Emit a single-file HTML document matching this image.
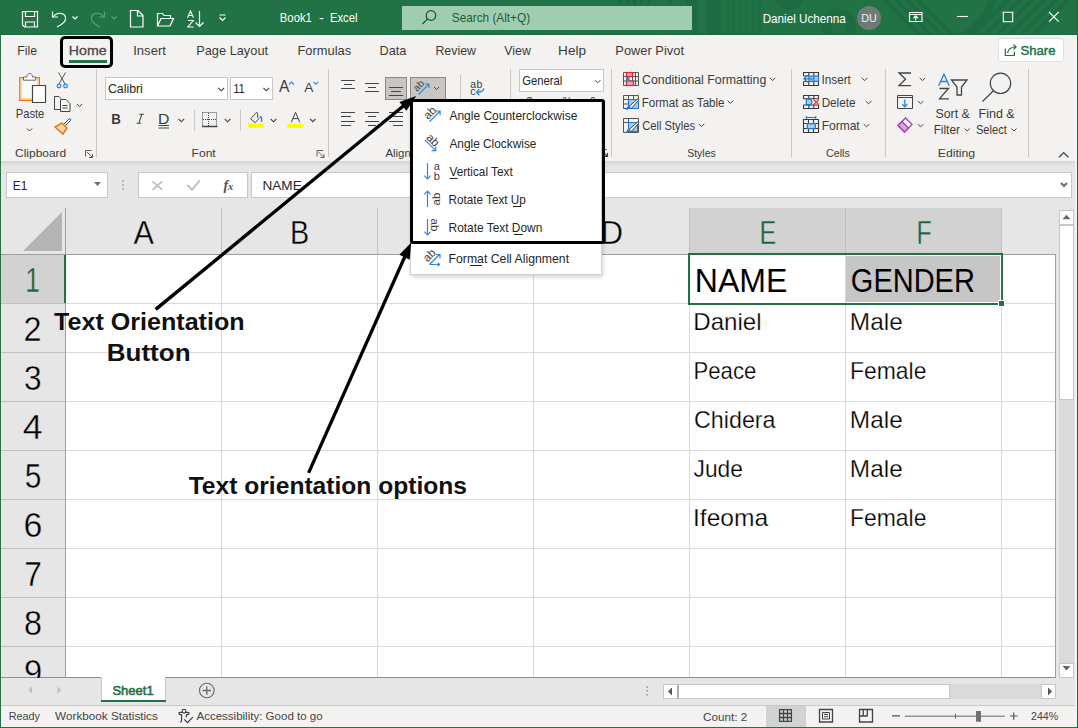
<!DOCTYPE html>
<html><head><meta charset="utf-8">
<style>
*{margin:0;padding:0;box-sizing:border-box}
html,body{width:1078px;height:728px;overflow:hidden;background:#f3f2f1;font-family:"Liberation Sans",sans-serif;color:#262626}
.a{position:absolute}
svg{position:absolute;left:0;top:0;overflow:visible}
svg text{font-family:"Liberation Sans",sans-serif}
.tl{left:0;top:0}
</style></head><body>
<!-- title bar -->
<div class="a" style="left:0;top:0;width:1078px;height:35px;background:#217346;border-bottom:1px solid #17683a"></div>
<div class="a" style="left:1px;top:35px;width:1075px;height:1px;background:#fdfbfb"></div>
<div class="a" style="left:1px;top:35px;width:1px;height:126px;background:#fdfbfb"></div>
<svg width="1078" height="34" style="overflow:hidden;height:34px">
 <g fill="#1f6b41">
  <rect x="707.5" y="0" width="13" height="34"/>
  <path d="M685 0h13v34h-4z"/>
  <rect x="619" y="0" width="3" height="5"/><rect x="626" y="0" width="3" height="5"/><rect x="633" y="0" width="3" height="5"/><rect x="640" y="0" width="3" height="5"/><rect x="648" y="0" width="3" height="5"/>
  <path d="M667 0h7l-3.5 5z"/>
  <rect x="727" y="0" width="1.6" height="34"/><rect x="733" y="0" width="1.6" height="34"/><rect x="739" y="0" width="1.6" height="34"/><rect x="745" y="0" width="1.6" height="34"/><rect x="752" y="0" width="1.6" height="34"/><rect x="759" y="0" width="1.6" height="34"/>
  <circle cx="789.5" cy="-4" r="14"/>
 </g>
 <g fill="none" stroke="#1f6b41">
  <circle cx="838.5" cy="26" r="12.5" stroke-width="10"/>
  <path d="M880 -5l40 40 M891 -5l40 40 M902 -5l40 40 M913 -5l40 40" stroke-width="4"/>
  <path d="M993 -2Q987 20 963 36" stroke-width="8"/>
  <path d="M1008 0l-34 34 M1020 0l-34 34 M1032 0l-34 34 M1044 0l-34 34 M1056 0l-34 34 M1068 0l-34 34" stroke-width="4"/>
 </g>
</svg>
<!-- green window border -->
<div class="a" style="left:0;top:0;width:1px;height:728px;background:#217346"></div>
<div class="a" style="left:1077px;top:0;width:1px;height:728px;background:#17683a"></div>
<div class="a" style="left:1076px;top:35px;width:1px;height:692px;background:#f7f3f3"></div>
<div class="a" style="left:0;top:726.5px;width:1078px;height:1.5px;background:#217346"></div>

<!-- title bar icons -->
<svg width="1078" height="34">
 <g fill="none" stroke="#fff" stroke-width="1.2">
  <path d="M22.5 11.5h15v15.5h-13l-2-2z"/>
  <path d="M25.5 11.5v5h9v-5M25.5 27v-5h9v5"/>
  <path d="M52.5 11.5v5.5h5.5"/>
  <path d="M53 17 C57 11.5 66 12 65.5 19 C65.5 21.5 63 24 57 27"/>
  <path d="M72.5 16.5l2.5 2.5 2.5-2.5"/>
 </g>
 <g fill="none" stroke="#5e9f7a" stroke-width="1.2">
  <path d="M104.5 11.5v5.5h-5.5"/>
  <path d="M104 17 C100 11.5 91 12 91.5 19 C91.5 21.5 94 24 100 27"/>
  <path d="M111.5 16.5l2.5 2.5 2.5-2.5"/>
 </g>
 <g fill="none" stroke="#fff" stroke-width="1.2">
  <path d="M130.5 10.5h7.5l5 5v11.5h-12.5z M137.5 10.5v5.5h5.5"/>
  <path d="M157.5 26v-12.5h5l1.5 2h6.5v3 M157.5 26h12.5l3.5-7.5h-12.5z"/>
 </g>
 <path d="M187.5 17.8l3-6.8 3 6.8 M188.6 15.5h3.8 M187.8 20.5h5.5l-5.5 6.5h5.8" fill="none" stroke="#fff" stroke-width="1.1"/>
 <g fill="none" stroke="#fff" stroke-width="1.2">
  <path d="M199.5 11v15.5M195.5 22.5l4 4 4-4"/>
  <path d="M219.5 15h6M219.5 17.5l3 3 3-3"/>
 </g>
</svg>
<!-- search -->
<div class="a" style="left:402px;top:6px;width:290px;height:24px;background:#a0cdb0"></div>
<svg width="700" height="34">
 <g fill="none" stroke="#1f4e31" stroke-width="1.2"><circle cx="431" cy="15.5" r="4.8"/><path d="M427.5 19l-5 5"/></g>
</svg>
<div class="a" style="left:857px;top:6px;width:24px;height:24px;border-radius:50%;background:#6e7b74"></div>
<svg width="1078" height="34">
 <g fill="none" stroke="#fff" stroke-width="1.1">
  <path d="M909.5 12.5h12.5v9h-12.5z M909.5 14.5h12.5 M915.7 20.5v-4.5 M913.3 18.3l2.4-2.4 2.4 2.4"/>
  <path d="M957 16.5h11"/>
  <path d="M1003.3 12.3h9.4v9.4h-9.4z"/>
  <path d="M1049 12l9.7 9.7 M1058.7 12l-9.7 9.7"/>
 </g>
</svg>

<!-- tabs -->
<div class="a" style="left:60px;top:36px;width:53px;height:32px;border:3px solid #000;border-radius:5px"></div>
<div class="a" style="left:69px;top:60px;width:38px;height:3px;background:#217346"></div>
<div class="a" style="left:998px;top:38px;width:66px;height:24px;background:#fff;border:1px solid #e1dfdd;border-radius:3px"></div>
<svg width="1078" height="70">
 <g fill="none" stroke="#217346" stroke-width="1.2"><path d="M1005.3 48.5v7h9v-4 M1007.5 53c1-4 3.5-6 8-6 M1013.5 44.5l2.5 2.5-2.5 2.5"/></g>
</svg>

<!-- ribbon separators -->
<svg width="1078" height="165">
 <g stroke="#c8c6c4" stroke-width="1">
  <path d="M96.5 69v88 M328.5 69v88 M460.5 75v82 M510.5 69v88 M611.5 69v88 M791.5 69v88 M885.5 69v88 M1028.5 69v88"/>
  <path d="M194.5 110v21 M240.5 110v21"/>
 </g>
</svg>

<!-- clipboard -->
<svg width="100" height="165">
 <path d="M19.8 77.7h19.5v22.5h-19.5z" fill="#f9f9f9" stroke="#e87a10" stroke-width="1.4"/>
 <path d="M21.3 79.2h16.5v19.5h-16.5z" fill="none" stroke="#f8dc95" stroke-width="1.3"/>
 <path d="M23.5 80.2v-3.2h3.3c0.3-2.3 1.4-3.6 2.9-3.6s2.6 1.3 2.9 3.6h3.1v3.2z" fill="#fff" stroke="#666" stroke-width="1"/>
 <path d="M32.5 85.5h13v17h-13z" fill="#fff" stroke="#444" stroke-width="1.2"/>
 <g fill="none" stroke="#555" stroke-width="1"><path d="M58.5 72.5l6.5 11.5 M65.5 72.5l-6.5 11.5"/></g>
 <g fill="none" stroke="#2b88d8" stroke-width="1.3"><circle cx="59" cy="86" r="1.8"/><circle cx="65.5" cy="86" r="1.8"/></g>
 <g fill="none" stroke="#444" stroke-width="1"><path d="M60.5 109.5h-6v-13h4.5l2 2 M60.5 99.5h5.5l4 4v8h-9.5z M62.5 105.5h5 M62.5 108h5"/><path d="M77 104l2.5 2.5 2.5-2.5"/><path d="M27 128.5l2.5 2.5 2.5-2.5"/></g>
 <path d="M55 127l7-4 5 5-4 6z" fill="#fbd4a8" stroke="#e07a1f" stroke-width="1.5"/>
 <path d="M64 124l5-5c1-1 2.5 0.5 1.5 1.5l-5 5" fill="#fff" stroke="#444" stroke-width="1"/>
 <path d="M85.5 150.5h6 M85.5 150.5v6 M87 152l5.5 5.5 M92.5 154v3.5h-3.5" fill="none" stroke="#605e5c" stroke-width="1"/>
</svg>

<!-- font group -->
<div class="a" style="left:105px;top:77px;width:123px;height:23px;background:#fff;border:1px solid #c8c6c4"></div>
<div class="a" style="left:230px;top:77px;width:43px;height:23px;background:#fff;border:1px solid #c8c6c4"></div>
<svg width="340" height="165">
 <g fill="none" stroke="#444" stroke-width="1.1">
  <path d="M218.5 88l2.8 2.8 2.8-2.8 M263.5 88l2.8 2.8 2.8-2.8"/>
  <path d="M178.5 119l2.8 2.8 2.8-2.8 M224.8 119l2.8 2.8 2.8-2.8 M270.7 119l2.8 2.8 2.8-2.8 M310.2 119l2.6 2.6 2.6-2.6"/>
 </g>
 <g fill="none" stroke="#2b88d8" stroke-width="1.1"><path d="M289 84.5l2.5-2.5 2.5 2.5 M313.5 81.8l2.3 2.5 2.3-2.5"/></g>
 <g fill="none" stroke="#444" stroke-width="1"><path d="M158.5 125.5h10.5 M158.5 128h10.5"/></g>
 <path d="M139.3 114.2h4.6 M136.6 123.3h4.6 M141.8 114.2l-3 9.1" fill="none" stroke="#444" stroke-width="1.1"/>
 <g fill="none" stroke="#444" stroke-width="1"><path d="M202.5 112.5h14v14 M202.5 112.5v14" stroke-dasharray="1 1"/><path d="M208.5 113v13 M203 119.5h13" stroke-dasharray="1 1"/><path d="M202 126.5h15.5" stroke-width="1.5"/></g>
 <rect x="248" y="123.8" width="16" height="4.1" fill="#ffff00"/>
 <rect x="287.3" y="123.8" width="15.5" height="4.1" fill="#ffff00"/>
 <path d="M291.3 122.3l4.2-10.1 4.2 10.1 M292.8 118.6h5.4" fill="none" stroke="#444" stroke-width="1"/>
 <path d="M250.6 118.7l4.6 4 4.6-5.2 M250.6 118.7l5-5.2c0.4-1.4 2-1.4 2 0v4.2" fill="none" stroke="#444" stroke-width="1"/>
 <path d="M259.8 116.3c1.6 0.3 2.2 2.5 1.7 5.6" fill="none" stroke="#2b88d8" stroke-width="1.5"/>
 <path d="M317 150.5h6 M317 150.5v6 M318.5 152l5.5 5.5 M324 154v3.5h-3.5" fill="none" stroke="#605e5c" stroke-width="1"/>
</svg>

<!-- alignment group -->
<svg width="620" height="165">
 <g fill="none" stroke="#444" stroke-width="1">
  <path d="M341 80.5h14 M344 84.5h8 M341 88.5h14"/>
  <path d="M365 83.5h14 M368 87.5h8 M365 91.5h14"/>
  <path d="M341 112.5h14 M341 116.5h10 M341 121.5h14 M341 125.5h10"/>
  <path d="M365 112.5h14 M368 116.5h8 M365 121.5h14 M368 125.5h8"/>
  <path d="M389 112.5h14 M393 116.5h10 M389 121.5h14 M393 125.5h10"/>
 </g>
</svg>
<div class="a" style="left:385px;top:77px;width:22px;height:23px;background:#c8c6c4;border:1px solid #8a8886"></div>
<svg width="620" height="165"><g fill="none" stroke="#444" stroke-width="1"><path d="M389 87.5h14 M391 91.5h10 M389 95.5h14"/></g></svg>
<div class="a" style="left:410px;top:77px;width:36px;height:23px;background:#c8c6c4;border:1px solid #8a8886"></div>
<svg width="620" height="165">
 <text transform="translate(418.5 85.5) rotate(-45)" y="3.6" font-size="10" fill="#444" text-anchor="middle">ab</text>
 <path d="M418.5 94.5l10.5-10.5 M425 84h4v4" fill="none" stroke="#2b88d8" stroke-width="1.1"/>
 <path d="M434 87l2.6 2.6 2.6-2.6" fill="none" stroke="#444" stroke-width="1"/>
 <text x="470.3" y="87.6" font-size="10.5" textLength="12" lengthAdjust="spacing" fill="#3b3a39">ab</text>
 <text x="470.3" y="95" font-size="10.5" fill="#3b3a39">c</text>
 <path d="M483.8 88.2c0.3 2.5-2.5 4.1-7.3 4.1 M479.4 89.3l-3 3 3 3" fill="none" stroke="#2b88d8" stroke-width="1.3"/>
</svg>

<!-- number -->
<div class="a" style="left:519px;top:69px;width:85px;height:23px;background:#fff;border:1px solid #c8c6c4"></div>
<svg width="620" height="165"><path d="M595 80.2l2.7 2.7 2.7-2.7" fill="none" stroke="#444" stroke-width="1"/>
 <path d="M600.5 149.5h6 M600.5 149.5v6 M602 151l5.5 5.5 M607.5 153v3.5h-3.5" fill="none" stroke="#3b3a39" stroke-width="1.1"/>
 <g fill="#444" font-size="11"><text x="526.5" y="104.8">$</text><text x="562.5" y="104.8">%</text><text x="590" y="104.8">9</text></g>
</svg>

<!-- styles -->
<svg width="800" height="165">
 <g stroke="#555" stroke-width="1" fill="none">
  <path d="M623.5 72.5h15v13h-15z M623.5 76.5h15 M623.5 81h15 M626.5 72.5v13 M632.5 72.5v13 M635.5 72.5v13"/>
 </g>
 <rect x="626.5" y="72.5" width="6" height="4" fill="#f4a3ad" stroke="#e0242f" stroke-width="1.2"/>
 <rect x="626.5" y="81" width="7" height="4.5" fill="#f4a3ad" stroke="#e0242f" stroke-width="1.2"/>
 <rect x="626.2" y="76.8" width="3.3" height="4" fill="#2b88d8"/>
 <g stroke="#555" stroke-width="1" fill="none">
  <path d="M623.5 95.5h15v13h-15z M623.5 99.5h15 M623.5 104h15 M628.5 95.5v13 M633.5 95.5v13"/>
 </g>
 <path d="M628.5 99.5h10v9h-10z" fill="#9fcdf3" stroke="#1f7ad1" stroke-width="1.1"/>
 <g stroke="#555" stroke-width="1" fill="none">
  <path d="M623.5 118.5h15v14h-15z M623.5 122.5h15 M628.5 118.5v14"/>
 </g>
 <path d="M628.5 122.5h9v9h-9z" fill="#9fcdf3" stroke="#1f7ad1" stroke-width="1.1"/>
 <path d="M629 106.5l8.3-7.3c0.9-0.8 2 0.3 1.2 1.2l-7.3 8.3z M629 129.5l8.3-7.3c0.9-0.8 2 0.3 1.2 1.2l-7.3 8.3z" fill="#f3f2f1" stroke="#444" stroke-width="1"/>
 <path d="M625.5 109.8c1.5 0.2 3.5-0.3 4.8-2.8l-1.5-1.3c-1.8 0.8-2.5 2.5-3.3 4.1z M625.5 132.8c1.5 0.2 3.5-0.3 4.8-2.8l-1.5-1.3c-1.8 0.8-2.5 2.5-3.3 4.1z" fill="#1f7ad1"/>
 <g fill="none" stroke="#444" stroke-width="1"><path d="M769.8 77.8l2.75 2.75 2.75-2.75 M727.6 100.6l2.8 2.8 2.8-2.8 M698.7 123.8l2.8 2.8 2.8-2.8"/></g>
 <path d="M702 150.5h6" stroke="#eee"/>
</svg>

<!-- cells -->
<svg width="1078" height="165">
 <g stroke="#3b3a39" stroke-width="1.1" fill="none">
  <path d="M803.5 76v-3.5h15v13h-15v-3.5 M803.5 76h5.5 M803.5 81.5h5.5 M808.8 72.5v3.5 M808.8 81.5v4 M813.8 72.5v13 M818.5 76v5.5"/>
  <path d="M803.5 98.8v-3.3h15v3.3 M803.5 105v3.5h15v-3.5 M803.5 98.8h15 M803.5 105h15 M808.8 95.5v3.3 M813.8 95.5v3.3 M808.8 105v3.5 M813.8 105v3.5"/>
  <path d="M803.5 119.5h15v13h-15z M803.5 123.5h15 M803.5 128.5h15 M808.5 119.5v13 M813.5 119.5v13"/>
 </g>
 <path d="M809 76.2h9.5v5.2h-9.5z" fill="#9fcdf3" stroke="#1f7ad1" stroke-width="1.2"/>
 <path d="M813.8 76.2v5.2" stroke="#1f7ad1" stroke-width="1.1"/>
 <path d="M813 78.8h-9 M807.6 75.3l-3.6 3.5 3.6 3.5" fill="none" stroke="#1f7ad1" stroke-width="1.3"/>
 <path d="M806.3 99.2h4.6l1.2 2.7-1.2 2.7h-4.6z" fill="#9fcdf3" stroke="#1f7ad1" stroke-width="1.2"/>
 <path d="M813.5 99.5l5.3 5.3 M818.8 99.5l-5.3 5.3" stroke="#e8404a" stroke-width="1.3"/>
 <path d="M807.3 123.6h8v5h-8z" fill="#9fcdf3" stroke="#1f7ad1" stroke-width="1.2"/>
 <path d="M806.3 117.5h9.5 M806.3 116v3 M815.8 116v3" stroke="#1f7ad1" stroke-width="1.1"/>
 <g fill="none" stroke="#444" stroke-width="1"><path d="M861.7 77.8l2.85 2.85 2.85-2.85 M865.7 101l2.85 2.85 2.85-2.85 M863.7 124l2.85 2.85 2.85-2.85"/></g>
</svg>

<!-- editing -->
<svg width="1078" height="165">
 <path d="M911 73h-12l6.5 6.3-6.5 6.3h12" fill="none" stroke="#444" stroke-width="1.3"/>
 <path d="M897.5 95.5h15v13h-15z M897.5 97.5h15" fill="none" stroke="#444" stroke-width="1"/>
 <path d="M904.8 99.5v7 M902.3 104.3l2.5 2.5 2.5-2.5" fill="none" stroke="#2b88d8" stroke-width="1.3"/>
 <path d="M898 125.5l7.5-7.5 6.5 6.5-7.5 7.5z" fill="#fff" stroke="#a53fb3" stroke-width="1.3"/>
 <path d="M898 125.5l4-4 6.5 6.5-4 4z" fill="#d9a4e0" stroke="#a53fb3" stroke-width="1.3"/>
 <g fill="none" stroke="#444" stroke-width="1"><path d="M919.7 77.8l2.85 2.85 2.85-2.85 M917.9 101l2.7 2.7 2.7-2.7 M917.9 124.2l2.7 2.7 2.7-2.7"/>
  <path d="M964.6 128.6l2.5 2.4 2.5-2.4 M1011.5 128.6l2.5 2.4 2.5-2.4"/>
  <path d="M1059 157.3l4.7-4.7 4.7 4.7" stroke-width="1.3"/></g>
 <path d="M938.7 85.7l5.25-11.5 5.25 11.5 M940.5 81.5h7" fill="none" stroke="#2b88d8" stroke-width="1.4"/>
 <path d="M939.5 88.5h9l-9 10.3h9.5" fill="none" stroke="#444" stroke-width="1.3"/>
 <path d="M951.5 80h15.5l-5.5 7v8h-4.5v-8z" fill="none" stroke="#444" stroke-width="1.3"/>
 <circle cx="1000.5" cy="83.3" r="10.2" fill="none" stroke="#444" stroke-width="1.2"/>
 <path d="M993.2 91l-10.7 10.5" stroke="#444" stroke-width="1.2"/>
</svg>

<!-- ribbon bottom / formula area -->
<div class="a" style="left:1px;top:161px;width:1074px;height:516px;background:#e6e6e6"></div>
<div class="a" style="left:1px;top:161px;width:1074px;height:5px;background:linear-gradient(#d4d4d4,#e6e6e6)"></div>
<div class="a" style="left:6px;top:172px;width:102px;height:26px;background:#fff;border:1px solid #c8c8c8"></div>
<div class="a" style="left:138px;top:172px;width:110px;height:26px;background:#fff;border:1px solid #c8c8c8"></div>
<div class="a" style="left:251px;top:172px;width:821px;height:26px;background:#fff;border:1px solid #c8c8c8"></div>
<svg width="1078" height="210">
 <path d="M94 182h7l-3.5 4z" fill="#707070"/>
 <g fill="#a0a0a0"><rect x="122.2" y="180" width="1.6" height="1.6"/><rect x="122.2" y="184" width="1.6" height="1.6"/><rect x="122.2" y="188.3" width="1.6" height="1.6"/></g>
 <path d="M152.5 181.3l9.8 8.5 M162.3 181.3l-9.8 8.5" stroke="#bdbdbd" stroke-width="1.7"/>
 <path d="M187.5 184.8l4.5 5 7.8-9.5" fill="none" stroke="#bdbdbd" stroke-width="1.9"/>
 <text x="223.5" y="189.5" font-size="14" font-style="italic" font-weight="bold" style="font-family:'Liberation Serif'" fill="#505050">f</text>
 <text x="228" y="190" font-size="10.5" font-style="italic" font-weight="bold" style="font-family:'Liberation Serif'" fill="#505050">x</text>
 <path d="M1061 183l3 3 3-3" fill="none" stroke="#666" stroke-width="1.8"/>
</svg>

<!-- grid -->
<div class="a" style="left:65px;top:254px;width:991px;height:423px;background:#fff"></div>
<div class="a" style="left:690px;top:208px;width:311px;height:46px;background:#d2d2d2"></div>
<div class="a" style="left:1px;top:254px;width:64px;height:49px;background:#d2d2d2"></div>
<svg width="1078" height="728">
 <g stroke="#d9d9d9" stroke-width="1">
  <path d="M221.5 254v423 M377.5 254v423 M533.5 254v423 M689.5 254v423 M845.5 254v423 M1001.5 254v423"/>
  <path d="M65 303.5h991 M65 352.5h991 M65 401.5h991 M65 450.5h991 M65 499.5h991 M65 548.5h991 M65 597.5h991 M65 646.5h991"/>
 </g>
 <g stroke="#c0c0c0" stroke-width="1">
  <path d="M221.5 208v46 M377.5 208v46 M533.5 208v46 M689.5 208v46 M845.5 208v46 M1001.5 208v46"/>
  <path d="M1 303.5h64 M1 352.5h64 M1 401.5h64 M1 450.5h64 M1 499.5h64 M1 548.5h64 M1 597.5h64 M1 646.5h64"/>
 </g>
 <g stroke="#9e9e9e" stroke-width="1">
  <path d="M1 254.5h1055"/>
  <path d="M65.5 208v469"/>
  <path d="M1055.5 254v423"/>
  <path d="M1 677.5h1055" stroke="#8f8f8f" stroke-width="1"/>
 </g>
 <path d="M62 212v39h-39z" fill="#b4b4b4"/>
 
 <path d="M65 255v48" stroke="#217346" stroke-width="2"/>
</svg>
<!-- selection -->
<div class="a" style="left:846px;top:256px;width:154px;height:46px;background:#c6c6c6"></div>
<div class="a" style="left:688px;top:253px;width:315px;height:52px;border:2px solid #217346"></div>
<div class="a" style="left:998px;top:300px;width:7px;height:7px;background:#217346;border:1px solid #fff"></div>

<svg class="tl" width="1078" height="728"><text x="133.45" y="243.60" font-size="33.62" textLength="20.42" lengthAdjust="spacingAndGlyphs" fill="#000" stroke="#e6e6e6" stroke-width="0.4">A</text>
<text x="290.10" y="243.60" font-size="33.62" textLength="19.20" lengthAdjust="spacingAndGlyphs" fill="#000" stroke="#e6e6e6" stroke-width="0.4">B</text>
<text x="600.50" y="243.60" font-size="33.62" textLength="22.58" lengthAdjust="spacingAndGlyphs" fill="#000" stroke="#e6e6e6" stroke-width="0.4">D</text>
<text x="759.39" y="243.60" font-size="33.62" textLength="16.77" lengthAdjust="spacingAndGlyphs" fill="#17633a" stroke="#d2d2d2" stroke-width="0.4">E</text>
<text x="916.61" y="243.60" font-size="33.62" textLength="15.21" lengthAdjust="spacingAndGlyphs" fill="#17633a" stroke="#d2d2d2" stroke-width="0.4">F</text>
<text x="25.33" y="292.20" font-size="34.49" textLength="14.62" lengthAdjust="spacingAndGlyphs" fill="#17633a" stroke="#d2d2d2" stroke-width="0.4">1</text>
<text x="23.57" y="341.20" font-size="34.49" textLength="18.09" lengthAdjust="spacingAndGlyphs" fill="#000" stroke="#e6e6e6" stroke-width="0.4">2</text>
<text x="24.03" y="390.20" font-size="34.49" textLength="17.63" lengthAdjust="spacingAndGlyphs" fill="#000" stroke="#e6e6e6" stroke-width="0.4">3</text>
<text x="22.71" y="439.20" font-size="34.49" textLength="19.80" lengthAdjust="spacingAndGlyphs" fill="#000" stroke="#e6e6e6" stroke-width="0.4">4</text>
<text x="24.80" y="488.20" font-size="34.49" textLength="16.63" lengthAdjust="spacingAndGlyphs" fill="#000" stroke="#e6e6e6" stroke-width="0.4">5</text>
<text x="23.60" y="537.20" font-size="34.49" textLength="18.86" lengthAdjust="spacingAndGlyphs" fill="#000" stroke="#e6e6e6" stroke-width="0.4">6</text>
<text x="24.22" y="586.20" font-size="34.49" textLength="17.60" lengthAdjust="spacingAndGlyphs" fill="#000" stroke="#e6e6e6" stroke-width="0.4">7</text>
<text x="23.94" y="635.20" font-size="34.49" textLength="17.99" lengthAdjust="spacingAndGlyphs" fill="#000" stroke="#e6e6e6" stroke-width="0.4">8</text>
<text x="23.93" y="684.20" font-size="34.49" textLength="18.18" lengthAdjust="spacingAndGlyphs" fill="#000" stroke="#e6e6e6" stroke-width="0.4">9</text>
<text x="694.73" y="292.00" font-size="33.19" textLength="92.68" lengthAdjust="spacingAndGlyphs" fill="#000">NAME</text>
<text x="850.85" y="292.00" font-size="33.19" textLength="124.05" lengthAdjust="spacingAndGlyphs" fill="#000">GENDER</text>
<text x="693.27" y="329.90" font-size="23.19" textLength="68.29" lengthAdjust="spacingAndGlyphs" fill="#000" stroke="#fff" stroke-width="0.25">Daniel</text>
<text x="849.85" y="329.90" font-size="23.19" textLength="52.89" lengthAdjust="spacingAndGlyphs" fill="#000" stroke="#fff" stroke-width="0.25">Male</text>
<text x="693.43" y="378.90" font-size="23.19" textLength="62.88" lengthAdjust="spacingAndGlyphs" fill="#000" stroke="#fff" stroke-width="0.25">Peace</text>
<text x="849.97" y="378.90" font-size="23.19" textLength="76.46" lengthAdjust="spacingAndGlyphs" fill="#000" stroke="#fff" stroke-width="0.25">Female</text>
<text x="694.04" y="427.90" font-size="23.19" textLength="81.51" lengthAdjust="spacingAndGlyphs" fill="#000" stroke="#fff" stroke-width="0.25">Chidera</text>
<text x="849.85" y="427.90" font-size="23.19" textLength="52.89" lengthAdjust="spacingAndGlyphs" fill="#000" stroke="#fff" stroke-width="0.25">Male</text>
<text x="693.56" y="476.90" font-size="23.19" textLength="49.43" lengthAdjust="spacingAndGlyphs" fill="#000" stroke="#fff" stroke-width="0.25">Jude</text>
<text x="849.85" y="476.90" font-size="23.19" textLength="52.89" lengthAdjust="spacingAndGlyphs" fill="#000" stroke="#fff" stroke-width="0.25">Male</text>
<text x="692.99" y="525.90" font-size="23.19" textLength="75.17" lengthAdjust="spacingAndGlyphs" fill="#000" stroke="#fff" stroke-width="0.25">Ifeoma</text>
<text x="849.97" y="525.90" font-size="23.19" textLength="76.46" lengthAdjust="spacingAndGlyphs" fill="#000" stroke="#fff" stroke-width="0.25">Female</text></svg>
<!-- vertical scrollbar -->
<div class="a" style="left:1059px;top:210px;width:15px;height:467px;background:#dadada"></div>
<div class="a" style="left:1059px;top:210px;width:15px;height:15px;background:#fff;border:1px solid #c6c6c6"></div>
<div class="a" style="left:1059px;top:225px;width:15px;height:175px;background:#fff;border:1px solid #c6c6c6"></div>
<div class="a" style="left:1059px;top:663px;width:15px;height:15px;background:#fff;border:1px solid #c6c6c6"></div>
<svg width="1078" height="728"><path d="M1062.5 219.2h8l-4-4.4z M1062.5 666h8l-4 4.4z" fill="#666"/></svg>

<!-- sheet tab bar -->
<div class="a" style="left:1px;top:678px;width:1074px;height:27px;background:#e6e6e6"></div>
<div class="a" style="left:1px;top:705px;width:1074px;height:1px;background:#c8c8c8"></div>
<div class="a" style="left:101px;top:677px;width:65px;height:24px;background:#fff;border-left:1px solid #c8c8c8;border-right:1px solid #c8c8c8"></div>
<div class="a" style="left:101px;top:699.5px;width:65px;height:2px;background:#217346"></div>
<svg width="1078" height="728">
 <path d="M32 686.5v7l-3.5-3.5z M57.5 686.5v7l3.5-3.5z" fill="#bdbdbd"/>
 <circle cx="206.8" cy="690.5" r="7.3" fill="none" stroke="#6a6a6a" stroke-width="1.1"/>
 <path d="M206.8 686.3v8.4 M202.6 690.5h8.4" stroke="#6a6a6a" stroke-width="1.3"/>
 <g fill="#a8a8a8"><rect x="646" y="686.3" width="2" height="1.6"/><rect x="646" y="690" width="2" height="1.6"/><rect x="646" y="694" width="2" height="1.6"/></g>
</svg>
<div class="a" style="left:663px;top:684px;width:393px;height:15px;background:#dadada"></div>
<div class="a" style="left:663px;top:684px;width:15px;height:15px;background:#fff;border:1px solid #c6c6c6"></div>
<div class="a" style="left:677px;top:684px;width:273px;height:15px;background:#fff;border:1px solid #c6c6c6;border-left:2px solid #b0b0b0"></div>
<div class="a" style="left:1041px;top:684px;width:15px;height:15px;background:#fff;border:1px solid #c6c6c6"></div>
<svg width="1078" height="728"><path d="M672 687.5v8l-4-4z M1048 687.5v8l4-4z" fill="#555"/></svg>

<!-- status bar -->
<div class="a" style="left:1px;top:706px;width:1074px;height:20px;background:#f3f2f1"></div>
<div class="a" style="left:766px;top:706px;width:40px;height:20.5px;background:#d2d2d2"></div>
<svg width="1078" height="728">
 <g fill="none" stroke="#333" stroke-width="1.1">
  <circle cx="184" cy="711.2" r="1.9"/>
  <path d="M182.2 712.6C179.5 711.4 177.6 713.6 179.8 714.4L181.6 714.9V719.8C181.6 721.4 180.8 722.2 180.2 721.8 M185.8 712.6C188.5 711.4 190.4 713.6 188.2 714.4L186.4 714.9V717.4 M184.3 719.3l3.2 3.4 5.3-5.6"/>
 </g>
 <g fill="none" stroke="#444" stroke-width="1.3">
  <path d="M779.6 709.6h11.8v11.8h-11.8z M783.5 709.5v12 M787.5 709.5v12 M779.5 713.5h12 M779.5 717.5h12"/>
  <path d="M819.5 709.5h13v12.5h-13z" />
 </g>
 <g fill="none" stroke="#444" stroke-width="1">
  <path d="M822.5 712.5h7v6.5h-7z M824 714.5h4 M824 716.7h4"/>
 </g>
 <g fill="none" stroke="#444" stroke-width="1.3">
  <path d="M859.5 709.5h13v12.5h-13z M863.3 709.5v6.5 M867.3 709.5v6.5 M859.5 716h8"/>
 </g>
 <path d="M892 715.8h8 M1010 716h7.5 M1013.7 712.5v7.3" stroke="#555" stroke-width="1.2"/>
 <path d="M904.8 716.2h100" stroke="#666" stroke-width="1"/>
 <path d="M955.5 713.8v5" stroke="#666" stroke-width="1"/>
 <rect x="976" y="711" width="5" height="10.7" fill="#707070"/>
</svg>

<svg class="tl" width="1078" height="728"><text x="279.80" y="22.00" font-size="12.61" textLength="32.08" lengthAdjust="spacingAndGlyphs" fill="#fff">Book1</text>
<text x="318.92" y="22.00" font-size="12.50" textLength="5.03" lengthAdjust="spacingAndGlyphs" fill="#fff">-</text>
<text x="329.90" y="22.00" font-size="12.61" textLength="27.54" lengthAdjust="spacingAndGlyphs" fill="#fff">Excel</text>
<text x="451.77" y="21.90" font-size="12.32" textLength="78.35" lengthAdjust="spacingAndGlyphs" fill="#1f5c36">Search (Alt+Q)</text>
<text x="762.67" y="22.90" font-size="13.19" textLength="83.04" lengthAdjust="spacingAndGlyphs" fill="#fff">Daniel Uchenna</text>
<text x="861.13" y="22.20" font-size="11.59" textLength="15.62" lengthAdjust="spacingAndGlyphs" fill="#eef2f0">DU</text>
<text x="17.32" y="55.00" font-size="13.04" textLength="19.64" lengthAdjust="spacingAndGlyphs" fill="#3b3a39">File</text>
<text x="133.22" y="55.00" font-size="13.04" textLength="32.65" lengthAdjust="spacingAndGlyphs" fill="#3b3a39">Insert</text>
<text x="196.18" y="55.00" font-size="13.04" textLength="71.90" lengthAdjust="spacingAndGlyphs" fill="#3b3a39">Page Layout</text>
<text x="297.47" y="55.00" font-size="13.04" textLength="53.61" lengthAdjust="spacingAndGlyphs" fill="#3b3a39">Formulas</text>
<text x="379.48" y="55.00" font-size="13.04" textLength="26.95" lengthAdjust="spacingAndGlyphs" fill="#3b3a39">Data</text>
<text x="435.41" y="55.00" font-size="13.04" textLength="40.58" lengthAdjust="spacingAndGlyphs" fill="#3b3a39">Review</text>
<text x="504.34" y="55.00" font-size="13.04" textLength="26.45" lengthAdjust="spacingAndGlyphs" fill="#3b3a39">View</text>
<text x="558.12" y="55.00" font-size="13.04" textLength="27.85" lengthAdjust="spacingAndGlyphs" fill="#3b3a39">Help</text>
<text x="615.37" y="55.00" font-size="13.04" textLength="68.60" lengthAdjust="spacingAndGlyphs" fill="#3b3a39">Power Pivot</text>
<text x="68.87" y="55.00" font-size="13.04" textLength="37.73" lengthAdjust="spacingAndGlyphs" fill="#4a4a4a" stroke="#4a4a4a" stroke-width="0.3">Home</text>
<text x="1020.41" y="54.50" font-size="13.04" textLength="35.06" lengthAdjust="spacingAndGlyphs" fill="#217346" stroke="#217346" stroke-width="0.45">Share</text>
<text x="15.70" y="118.00" font-size="12.90" textLength="28.67" lengthAdjust="spacingAndGlyphs" fill="#3b3a39">Paste</text>
<text x="15.10" y="156.50" font-size="11.01" textLength="51.08" lengthAdjust="spacingAndGlyphs" fill="#3b3a39">Clipboard</text>
<text x="107.88" y="93.00" font-size="13.19" textLength="34.97" lengthAdjust="spacingAndGlyphs" fill="#262626">Calibri</text>
<text x="233.15" y="93.00" font-size="13.19" textLength="11.80" lengthAdjust="spacingAndGlyphs" fill="#262626">11</text>
<text x="191.64" y="156.80" font-size="11.01" textLength="24.03" lengthAdjust="spacingAndGlyphs" fill="#3b3a39">Font</text>
<text x="385.44" y="156.70" font-size="11.01" textLength="50.63" lengthAdjust="spacingAndGlyphs" fill="#3b3a39">Alignment</text>
<text x="522.24" y="84.80" font-size="12.03" textLength="40.13" lengthAdjust="spacingAndGlyphs" fill="#262626">General</text>
<text x="642.08" y="84.00" font-size="12.61" textLength="124.23" lengthAdjust="spacingAndGlyphs" fill="#3b3a39">Conditional Formatting</text>
<text x="641.77" y="106.80" font-size="12.61" textLength="82.76" lengthAdjust="spacingAndGlyphs" fill="#3b3a39">Format as Table</text>
<text x="642.14" y="130.00" font-size="12.61" textLength="52.89" lengthAdjust="spacingAndGlyphs" fill="#3b3a39">Cell Styles</text>
<text x="687.13" y="156.90" font-size="11.01" textLength="28.68" lengthAdjust="spacingAndGlyphs" fill="#3b3a39">Styles</text>
<text x="821.54" y="84.00" font-size="12.32" textLength="29.33" lengthAdjust="spacingAndGlyphs" fill="#3b3a39">Insert</text>
<text x="821.67" y="106.80" font-size="12.32" textLength="33.77" lengthAdjust="spacingAndGlyphs" fill="#3b3a39">Delete</text>
<text x="821.64" y="129.70" font-size="12.32" textLength="38.05" lengthAdjust="spacingAndGlyphs" fill="#3b3a39">Format</text>
<text x="826.07" y="156.50" font-size="11.01" textLength="23.74" lengthAdjust="spacingAndGlyphs" fill="#3b3a39">Cells</text>
<text x="935.44" y="118.00" font-size="12.32" textLength="34.33" lengthAdjust="spacingAndGlyphs" fill="#3b3a39">Sort &amp;</text>
<text x="933.66" y="134.00" font-size="12.32" textLength="26.25" lengthAdjust="spacingAndGlyphs" fill="#3b3a39">Filter</text>
<text x="978.50" y="118.00" font-size="12.32" textLength="36.19" lengthAdjust="spacingAndGlyphs" fill="#3b3a39">Find &amp;</text>
<text x="975.90" y="134.00" font-size="12.32" textLength="30.90" lengthAdjust="spacingAndGlyphs" fill="#3b3a39">Select</text>
<text x="937.72" y="156.50" font-size="11.01" textLength="37.45" lengthAdjust="spacingAndGlyphs" fill="#3b3a39">Editing</text>
<text x="111.34" y="123.80" font-size="14.64" textLength="9.59" lengthAdjust="spacingAndGlyphs" fill="#3b3a39" font-weight="bold">B</text>
<text x="158.04" y="123.80" font-size="14.64" textLength="11.41" lengthAdjust="spacingAndGlyphs" fill="#3b3a39">D</text>
<text x="279.12" y="92.40" font-size="16.96" textLength="10.41" lengthAdjust="spacingAndGlyphs" fill="#3b3a39">A</text>
<text x="304.33" y="92.40" font-size="12.32" textLength="9.10" lengthAdjust="spacingAndGlyphs" fill="#3b3a39">A</text>
<text x="12.85" y="190.00" font-size="13.19" textLength="14.52" lengthAdjust="spacingAndGlyphs" fill="#262626">E1</text>
<text x="262.52" y="190.00" font-size="12.90" textLength="39.18" lengthAdjust="spacingAndGlyphs" fill="#262626">NAME</text>
<text x="8.63" y="720.00" font-size="11.45" textLength="31.33" lengthAdjust="spacingAndGlyphs" fill="#444">Ready</text>
<text x="55.14" y="720.30" font-size="11.45" textLength="102.70" lengthAdjust="spacingAndGlyphs" fill="#444">Workbook Statistics</text>
<text x="196.44" y="720.20" font-size="11.45" textLength="126.22" lengthAdjust="spacingAndGlyphs" fill="#444">Accessibility: Good to go</text>
<text x="703.12" y="721.00" font-size="11.45" textLength="44.17" lengthAdjust="spacingAndGlyphs" fill="#444">Count: 2</text>
<text x="1030.97" y="719.80" font-size="11.45" textLength="27.23" lengthAdjust="spacingAndGlyphs" fill="#444">244%</text>
<text x="112.41" y="694.90" font-size="13.62" textLength="41.23" lengthAdjust="spacingAndGlyphs" fill="#1e6b3c" stroke="#1e6b3c" stroke-width="0.55">Sheet1</text></svg>

<!-- dropdown menu -->
<div class="a" style="left:410px;top:100px;width:192px;height:175px;background:#fff;border:1px solid #d0d0d0;box-shadow:1px 2px 4px rgba(0,0,0,.18)"></div>
<div class="a" style="left:410px;top:99px;width:195px;height:145px;border:3px solid #000;border-radius:3px"></div>
<svg width="1078" height="728">
 <g font-size="11.5" fill="#3b3a39" text-anchor="middle">
  <text transform="translate(429.5 112.5) rotate(-45)" y="4.1">ab</text>
  <text transform="translate(433.2 139.9) rotate(45)" y="4.1">ab</text>
  <text x="436.8" y="169.5" font-size="11">a</text><text x="436.8" y="179.6" font-size="11">b</text>
  <text transform="translate(435.6 199) rotate(-90)" y="4.1">ab</text>
  <text transform="translate(435.6 225) rotate(90)" y="4.1">ab</text>
  <text transform="translate(429 255) rotate(-45)" y="4.1">ab</text>
 </g>
 <g fill="none" stroke="#2b88d8" stroke-width="1.2">
  <path d="M429.6 121.5l10.5-10.5 M436 111h4.1v4.1"/>
  <path d="M425.2 140.2l10.5 10.5 M435.7 146.6v4.1h-4.1"/>
  <path d="M427.5 163.3v15.6 M424.3 175.7l3.2 3.2 3.2-3.2"/>
  <path d="M427.5 207v-15.8 M424.3 194.4l3.2-3.2 3.2 3.2"/>
  <path d="M427.5 219v15.8 M424.3 231.6l3.2 3.2 3.2-3.2"/>
  <path d="M429.5 264.5l10-10 M436 254.5h4v4 M429.5 264.5h10 M437.7 262.7l1.8 1.8-1.8 1.8"/>
 </g>
 <g stroke="#262626" stroke-width="1">
  <path d="M490.5 122.5h7 M471.5 150.5h4 M449.5 178.5h8 M513 206.5h8 M514 234.5h9 M470 265.5h12"/>
 </g>
</svg>
<svg class="tl" width="1078" height="728"><text x="449.44" y="119.80" font-size="12.46" textLength="127.86" lengthAdjust="spacingAndGlyphs" fill="#262626">Angle Counterclockwise</text>
<text x="449.44" y="147.90" font-size="12.46" textLength="87.01" lengthAdjust="spacingAndGlyphs" fill="#262626">Angle Clockwise</text>
<text x="449.44" y="175.90" font-size="12.46" textLength="63.25" lengthAdjust="spacingAndGlyphs" fill="#262626">Vertical Text</text>
<text x="448.56" y="203.90" font-size="12.46" textLength="77.32" lengthAdjust="spacingAndGlyphs" fill="#262626">Rotate Text Up</text>
<text x="448.55" y="231.90" font-size="12.46" textLength="93.72" lengthAdjust="spacingAndGlyphs" fill="#262626">Rotate Text Down</text>
<text x="448.52" y="262.70" font-size="12.46" textLength="120.57" lengthAdjust="spacingAndGlyphs" fill="#262626">Format Cell Alignment</text></svg>

<!-- annotations -->
<svg width="1078" height="728">
 <path d="M155.7 309.4L404.5 105" stroke="#000" stroke-width="3.4"/>
 <path d="M416.2 96l-16.8 6 7 8.8z" fill="#000"/>
 <path d="M308.6 472.8L406 254" stroke="#000" stroke-width="3.3"/>
 <path d="M411.2 242.4l-11.8 12.3 10.3 5z" fill="#000"/>
</svg>
<svg class="tl" width="1078" height="728"><text x="54.05" y="329.60" font-size="23.62" textLength="190.54" lengthAdjust="spacingAndGlyphs" fill="#111" font-weight="bold">Text Orientation</text>
<text x="106.71" y="361.20" font-size="23.62" textLength="83.87" lengthAdjust="spacingAndGlyphs" fill="#111" font-weight="bold">Button</text>
<text x="188.65" y="494.30" font-size="24.20" textLength="278.42" lengthAdjust="spacingAndGlyphs" fill="#111" font-weight="bold">Text orientation options</text></svg>
</body></html>
